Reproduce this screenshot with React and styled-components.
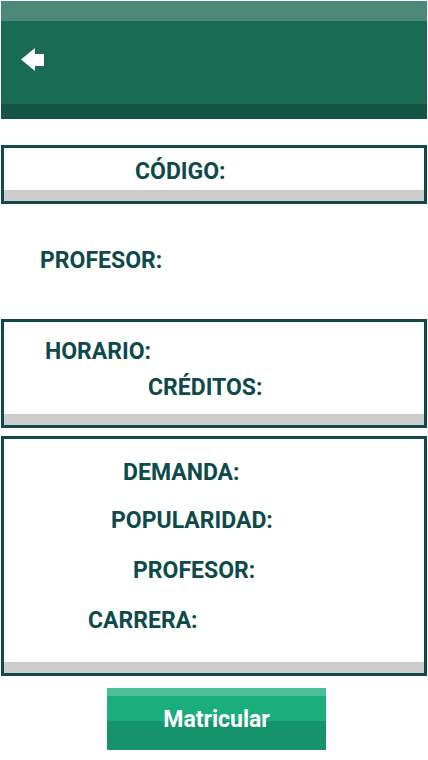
import React from "react";
import styled, { createGlobalStyle } from "styled-components";

const GlobalStyle = createGlobalStyle`
  body {
    margin: 0;
    background: #ffffff;
    font-family: Roboto, "Liberation Sans", sans-serif;
  }
`;

const Page = styled.div`
  width: 426px;
  padding: 1px;
  display: flex;
  flex-direction: column;
`;

const Header = styled.header`
  height: 77px;
  background: #196c53;
  border-top: 20px solid #4a8a76;
  border-bottom: 15px solid #135442;
  display: flex;
  align-items: center;
  padding: 0 0 6px 20px;
  box-sizing: content-box;
`;

const BackButton = styled.button`
  border: none;
  background: none;
  padding: 0;
  width: 23px;
  height: 23px;
  display: flex;
  cursor: pointer;
`;

const Card = styled.section`
  margin-top: ${(p) => p.$gap}px;
  border: 3px solid #0e4a4a;
  background: #ffffff;
  display: flex;
  flex-direction: column;
`;

const CardBody = styled.div`
  height: ${(p) => p.$height}px;
  padding-top: ${(p) => p.$top}px;
  box-sizing: border-box;
  display: flex;
  flex-direction: column;
`;

const Band = styled.div`
  height: 11px;
  background: #cccccc;
`;

const Label = styled.div`
  margin-top: ${(p) => p.$gap || 0}px;
  padding-left: ${(p) => p.$indent}px;
  font-size: 23px;
  line-height: 26px;
  font-weight: 700;
  color: #0e4a4a;
`;

const Actions = styled.div`
  margin-top: 12px;
  padding-left: 106px;
  display: flex;
`;

const SubmitButton = styled.button`
  width: 219px;
  height: 62px;
  border: none;
  padding: 0;
  background: linear-gradient(
    to bottom,
    #4bbf97 0,
    #4bbf97 8px,
    #1bae7d 8px,
    #1bae7d 33px,
    #17936b 33px,
    #17936b 100%
  );
  color: #ffffff;
  font-family: Roboto, "Liberation Sans", sans-serif;
  font-size: 23px;
  font-weight: 700;
  cursor: pointer;
`;

const ArrowIcon = () => (
  <svg width="23" height="23" viewBox="0 0 23 23">
    <path d="M0 11.5 L14 0 L14 6 L23 6 L23 18 L14 18 L14 23 Z" fill="#ffffff" />
  </svg>
);

export default function App() {
  return (
    <>
      <GlobalStyle />
      <Page>
        <Header>
          <BackButton aria-label="Volver">
            <ArrowIcon />
          </BackButton>
        </Header>

        <Card $gap={26}>
          <CardBody $height={42} $top={11}>
            <Label $indent={131}>CÓDIGO:</Label>
          </CardBody>
          <Band />
        </Card>

        <Label $gap={44} $indent={39}>PROFESOR:</Label>

        <Card $gap={45}>
          <CardBody $height={92} $top={17}>
            <Label $indent={41}>HORARIO:</Label>
            <Label $gap={10} $indent={144}>CRÉDITOS:</Label>
          </CardBody>
          <Band />
        </Card>

        <Card $gap={8}>
          <CardBody $height={223} $top={21}>
            <Label $indent={119}>DEMANDA:</Label>
            <Label $gap={22} $indent={107}>POPULARIDAD:</Label>
            <Label $gap={24} $indent={129}>PROFESOR:</Label>
            <Label $gap={24} $indent={84}>CARRERA:</Label>
          </CardBody>
          <Band />
        </Card>

        <Actions>
          <SubmitButton>Matricular</SubmitButton>
        </Actions>
      </Page>
    </>
  );
}
